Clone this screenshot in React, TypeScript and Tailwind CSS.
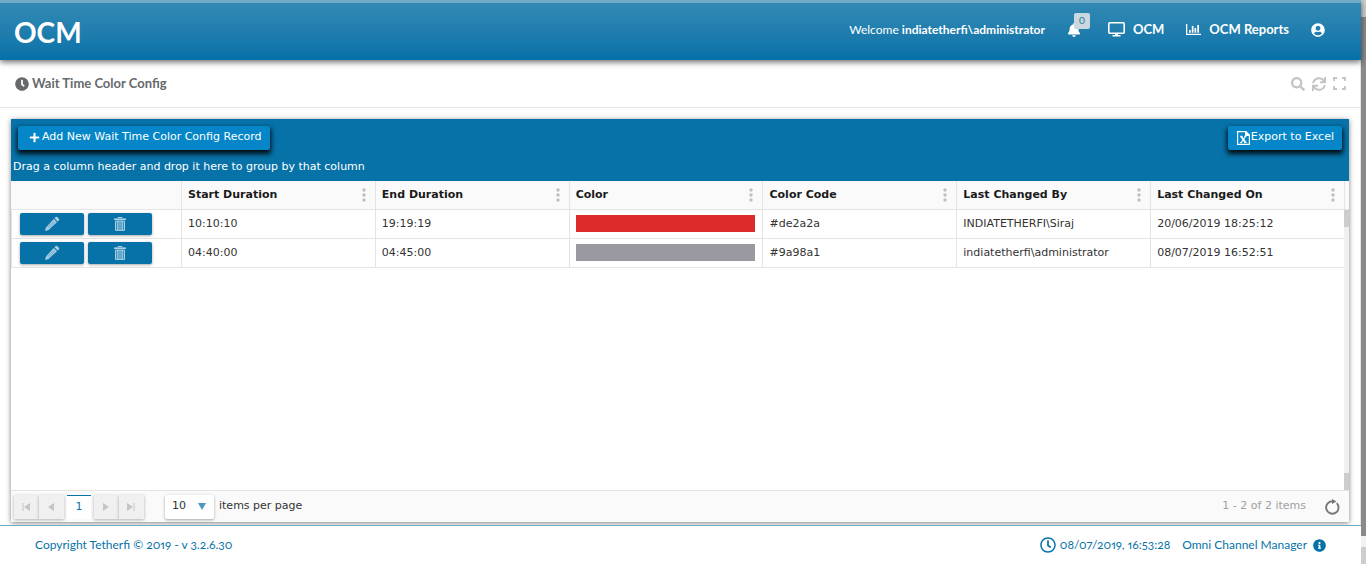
import React from "react";
import { FaBell, FaClock, FaInfoCircle, FaPlus, FaRegClock, FaSearch, FaSync, FaUserCircle } from "react-icons/fa";

const columns = ["Start Duration", "End Duration", "Color", "Color Code", "Last Changed By", "Last Changed On"];

const rows = [
  { start: "10:10:10", end: "19:19:19", swatch: "bg-[#de2a2a]", code: "#de2a2a", by: "INDIATETHERFI\\Siraj", on: "20/06/2019 18:25:12" },
  { start: "04:40:00", end: "04:45:00", swatch: "bg-[#9a98a1]", code: "#9a98a1", by: "indiatetherfi\\administrator", on: "08/07/2019 16:52:51" },
];

const cell = "border-l border-b border-[#e4e4e4] pl-[6px] text-left whitespace-nowrap";
const pagerButton =
  "flex h-6 w-[25px] items-center justify-center bg-[#f0f0f0] pr-px text-[#c4c4c4] shadow-[0_1px_3px_rgba(0,0,0,0.3)]";
const toolbarButton =
  "flex h-6 items-center rounded-xs bg-[#0586c8] pb-px shadow-[0_3px_5px_1px_rgba(0,0,0,0.9)] whitespace-nowrap";
const rowButton =
  "flex h-[22px] w-16 items-center justify-center rounded-xs bg-[#0772a8] text-[#a9cfe3] shadow-[0_1px_3px_rgba(0,0,0,0.35)]";

function MonitorIcon() {
  return (
    <svg width="17" height="15" viewBox="0 0 17 15" fill="none" stroke="currentColor" aria-hidden="true">
      <rect x=".8" y=".8" width="15.400" height="10.400" rx="1" strokeWidth="1.600" />
      <path d="M7 11h3v2h2.500v1.500h-8V13H7z" fill="currentColor" stroke="none" />
    </svg>
  );
}

function ChartIcon() {
  return (
    <svg width="15" height="12" viewBox="0 0 15 12" fill="currentColor" aria-hidden="true">
      <path d="M0 0h1.300v9.700H15V11H0zM3 6h1.700v2.800H3zM5.800 2h1.700v6.800H5.800zM8.500 4h1.700v4.800H8.500zM11.300 1H13v7.800h-1.700z" />
    </svg>
  );
}

function ExpandIcon() {
  return (
    <svg width="13" height="13" viewBox="0 0 13 13" fill="none" stroke="currentColor" strokeWidth="1.800" aria-hidden="true">
      <path d="M1 4V1h3M9 1h3v3M12 9v3H9M4 12H1V9" />
    </svg>
  );
}

function ExcelIcon() {
  return (
    <svg width="13" height="14" viewBox="0 0 13 14" fill="none" stroke="currentColor" aria-hidden="true">
      <path d="M.6.6h8.400l3.400 3.400v9.400H.6z" strokeWidth="1.200" />
      <path d="M8.500.5v4h4z" fill="currentColor" />
      <path d="M4.200 5.500l4.300 6" strokeWidth="2" />
      <path d="M8.500 5.500l-4.300 6" strokeWidth="1.200" />
      <path d="M3 5.300h2.500M7.300 5.300h2.200M3 11.600h2.200M7 11.600h2.700" />
    </svg>
  );
}

function PencilIcon() {
  return (
    <svg width="16" height="16" viewBox="0 0 16 16" fill="currentColor" aria-hidden="true">
      <path d="M11.600 1.100q.8-.7 1.600 0l1.700 1.700q.7.800 0 1.600L13.700 5.600l-3.300-3.300z" />
      <path d="M9.700 3l3.300 3.300L4.600 14 1 15l1-3.600z" />
      <path d="M9.900 5.300l-6.200 6.200M11 6.400l-6.200 6.200" stroke="#3d90bb" strokeWidth=".6" />
    </svg>
  );
}

function TrashIcon() {
  return (
    <svg width="12" height="14" viewBox="0 0 12 14" fill="none" stroke="currentColor" aria-hidden="true">
      <path d="M0 2.200h12" strokeWidth="1.600" />
      <path d="M4 1.500V.5h4v1" />
      <path d="M1.500 4v9.400h9V4z" fill="currentColor" fillOpacity=".3" />
      <path d="M3.500 4v9M5 4v9M7 4v9M8.500 4v9" strokeWidth=".8" />
    </svg>
  );
}

function DotsIcon() {
  return (
    <svg width="4" height="14" viewBox="0 0 4 14" fill="currentColor" aria-hidden="true">
      <circle cx="2" cy="2" r="1.700" />
      <circle cx="2" cy="7" r="1.700" />
      <circle cx="2" cy="12" r="1.700" />
    </svg>
  );
}

function ArrowIcon({ left = false, bar = false }: { left?: boolean; bar?: boolean }) {
  return (
    <svg className={left ? "rotate-180" : ""} width="8" height="8" viewBox="0 0 8 8" fill="currentColor" aria-hidden="true">
      <path d={bar ? "M0 0l6 4-6 4zM6.500 0h1v8h-1z" : "M1 0l6 4-6 4z"} />
    </svg>
  );
}

function ReloadIcon() {
  return (
    <svg width="16" height="16" viewBox="0 0 16 16" fill="none" stroke="currentColor" strokeWidth="1.900" aria-hidden="true">
      <path d="M12.700 4.100A6.200 6.200 0 1 1 8.500 2.300" />
      <path d="M8 0l4.500 2.500L8 5z" fill="currentColor" stroke="none" />
    </svg>
  );
}

export default function App() {
  return (
    <div className="flex h-screen bg-white font-['DejaVu_Sans',sans-serif] text-[11px] text-[#333]">
      <div className="flex min-w-0 flex-1 flex-col">
        <header className="z-10 flex h-[60px] shrink-0 items-center justify-between border-t-3 border-[#72aac8] bg-linear-to-b from-[#328ab3] to-[#0471a8] pr-9 pb-1 pl-[14px] font-[Lato,sans-serif] text-white shadow-[0_2px_6px_rgba(0,0,0,0.6)]">
          <h1 className="pt-1 text-[28px] font-bold">OCM</h1>
          <nav className="flex items-center text-[13px] font-bold">
            <span className="text-[12px] font-normal">
              Welcome <b>indiatetherfi\administrator</b>
            </span>
            <button className="relative ml-[22px] flex" aria-label="Notifications">
              <FaBell size={14} />
              <span className="absolute -top-[10px] left-[7px] flex size-4 items-center justify-center rounded-xs bg-[#c9d7df] text-[10px] font-normal text-[#2b7ba3]">0</span>
            </button>
            <a href="#ocm" className="ml-[27px] flex items-center gap-2">
              <MonitorIcon />OCM
            </a>
            <a href="#reports" className="ml-[22px] flex items-center gap-2">
              <ChartIcon />OCM Reports
            </a>
            <button className="ml-[22px]" aria-label="Account">
              <FaUserCircle size={14} />
            </button>
          </nav>
        </header>

        <div className="flex h-12 shrink-0 items-center justify-between border-r border-b border-[#e4e4e4] pr-[14px] pl-[15px]">
          <h2 className="flex items-center gap-[3px] font-[Lato,sans-serif] text-[13px] font-bold text-[#666a6d]">
            <FaClock size={14} />
            Wait Time Color Config
          </h2>
          <div className="flex items-center gap-[7px] text-[#c4c4c4]">
            <button aria-label="Search"><FaSearch size={14} /></button>
            <button aria-label="Refresh"><FaSync size={14} /></button>
            <button aria-label="Full screen"><ExpandIcon /></button>
          </div>
        </div>

        <main className="flex min-h-0 flex-1 flex-col border-r border-[#e4e4e4] pt-[11px] pr-[11px] pb-[3px] pl-[11px]">
          <section className="flex min-h-0 flex-1 flex-col shadow-[0_1px_5px_rgba(0,0,0,0.5)]">
            <div className="h-[62px] shrink-0 bg-[#0772a8] pt-[7px] text-white">
              <div className="flex justify-between px-[7px]">
                <button className={`${toolbarButton} gap-[2px] pr-2 pl-[11px]`}>
                  <FaPlus size={11} />Add New Wait Time Color Config Record
                </button>
                <button className={`${toolbarButton} gap-[1px] pr-2 pl-[9px]`}>
                  <ExcelIcon />Export to Excel
                </button>
              </div>
              <p className="pt-[9px] pl-[2px] leading-4">Drag a column header and drop it here to group by that column</p>
            </div>

            <div className="flex min-h-0 flex-1">
              <div className="min-w-0 flex-1">
                <table className="w-full table-fixed border-separate border-spacing-0">
                  <colgroup>
                    <col className="w-[170px]" />
                    {columns.map((name) => <col key={name} />)}
                  </colgroup>
                  <thead className="bg-[#fafafa] text-[#1a1a1a]">
                    <tr className="h-[29px]">
                      <td className="border-b border-[#e4e4e4]" />
                      {columns.map((name) => (
                        <th key={name} scope="col" className={`${cell} pr-[9px]`}>
                          <div className="flex items-center justify-between">
                            {name}
                            <button className="text-[#bfbfbf]" aria-label={`${name} menu`}><DotsIcon /></button>
                          </div>
                        </th>
                      ))}
                    </tr>
                  </thead>
                  <tbody>
                    {rows.map((row) => (
                      <tr key={row.code} className="h-[29px]">
                        <td className={cell}>
                          <div className="flex gap-1 pl-[2px]">
                            <button className={rowButton} aria-label="Edit"><PencilIcon /></button>
                            <button className={rowButton} aria-label="Delete"><TrashIcon /></button>
                          </div>
                        </td>
                        <td className={cell}>{row.start}</td>
                        <td className={cell}>{row.end}</td>
                        <td className={`${cell} pr-[7px] pb-px`}><div className={`h-[17px] ${row.swatch}`} /></td>
                        <td className={cell}>{row.code}</td>
                        <td className={cell}>{row.by}</td>
                        <td className={cell}>{row.on}</td>
                      </tr>
                    ))}
                  </tbody>
                </table>
              </div>
              <div className="flex w-[5px] flex-col bg-[#f0f0f0]">
                <div className="h-[29px] border-b border-l border-[#e4e4e4] bg-[#fafafa]" />
                <div className="h-[17px] bg-[#cdcdcd]" />
                <div className="flex-1" />
                <div className="h-[17px] bg-[#cdcdcd]" />
              </div>
            </div>

            <div className="flex h-8 shrink-0 items-center justify-between border-t border-[#e4e4e4] bg-[#fafafa] pr-[9px] pl-[3px]">
              <div className="flex items-center">
                <button className={pagerButton} aria-label="First page"><ArrowIcon left bar /></button>
                <button className={pagerButton} aria-label="Previous page"><ArrowIcon left /></button>
                <button className="mx-[3px] h-6 w-6 border-t border-[#0772a8] bg-white text-[#0772a8]">1</button>
                <button className={pagerButton} aria-label="Next page"><ArrowIcon /></button>
                <button className={pagerButton} aria-label="Last page"><ArrowIcon bar /></button>
                <label className="ml-[21px] flex items-center gap-[5px]">
                  <span className="relative flex items-center">
                    <select className="h-6 w-[49px] appearance-none rounded-xs bg-white pl-[7px] shadow-[0_1px_3px_rgba(0,0,0,0.35)]">
                      <option>10</option>
                    </select>
                    <svg className="pointer-events-none absolute right-2" width="8" height="7" viewBox="0 0 8 7" fill="#4d97c0" aria-hidden="true">
                      <path d="M0 0h8L4 7z" />
                    </svg>
                  </span>
                  items per page
                </label>
              </div>
              <div className="flex items-center gap-[18px] text-[#a0a0a0]">
                1 - 2 of 2 items
                <button className="text-[#777]" aria-label="Reload"><ReloadIcon /></button>
              </div>
            </div>
          </section>
        </main>

        <footer className="flex h-[39px] shrink-0 items-center justify-between border-t border-[#6da9c8] bg-white pr-[35px] pl-[35px] font-[Lato,sans-serif] text-[12px] text-[#0772a8] [font-variant-numeric:oldstyle-nums_proportional-nums]">
          <span>Copyright Tetherfi © 2019 - v 3.2.6.30</span>
          <div className="flex items-center">
            <FaRegClock size={16} />
            <span className="ml-1">08/07/2019, 16:53:28</span>
            <span className="ml-3">Omni Channel Manager</span>
            <FaInfoCircle className="ml-[6px]" size={13} />
          </div>
        </footer>
      </div>

      <div className="flex w-[5px] shrink-0 flex-col bg-[#8a8a8a]">
        <div className="h-[17px] bg-[#cdcdcd]" />
        <div className="flex-1" />
        <div className="h-[11px] bg-[#f1f1f1]" />
        <div className="h-[17px] bg-[#cdcdcd]" />
      </div>
    </div>
  );
}
